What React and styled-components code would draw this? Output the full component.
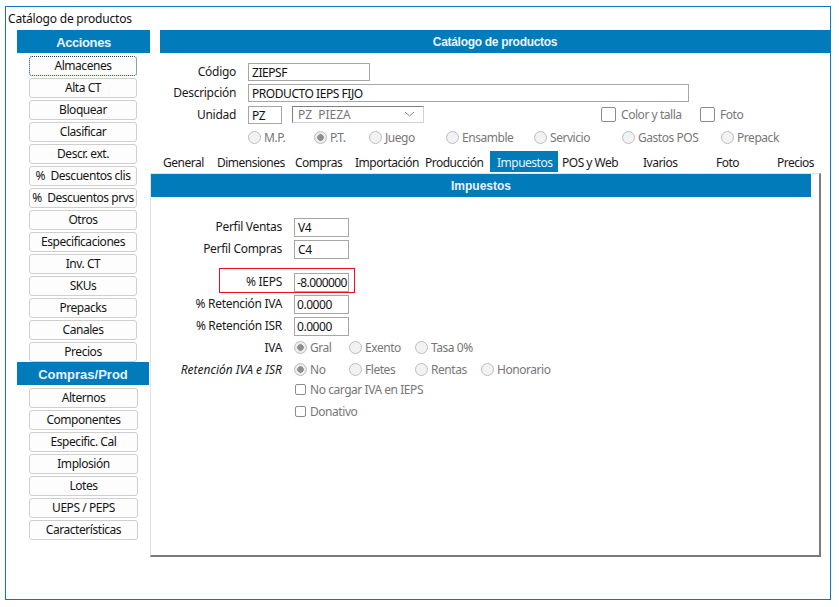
import React from "react";
import styled, { createGlobalStyle } from "styled-components";

const GlobalStyle = createGlobalStyle`
  html, body {
    margin: 0;
    padding: 0;
    background: #fff;
  }
  body {
    font-family: "Noto Sans", "Open Sans", sans-serif;
    font-size: 12px;
    color: #1a1a1a;
  }
`;

const Page = styled.div`
  padding: 6px 0 0 5px;
`;
const Window = styled.div`
  box-sizing: border-box;
  width: 826px;
  height: 594px;
  border: 1px solid #0a78c8;
  box-shadow: 0 1px 0 #b5b5b5;
  background: #fff;
`;
const WindowTitle = styled.div`
  height: 23px;
  padding-left: 2px;
  line-height: 23px;
  font-size: 12px;
  letter-spacing: -0.2px;
  color: #111;
`;
const Body = styled.div`
  display: flex;
`;
const Sidebar = styled.div`
  width: 133px;
  margin-left: 11px;
  display: flex;
  flex-direction: column;
`;
const BlueHeader = styled.div`
  height: 23px;
  line-height: ${(props) => props.$line || 24}px;
  background: #027bbb;
  color: #e9f3f9;
  text-align: center;
  font-family: "Liberation Sans", Arial, sans-serif;
  font-weight: bold;
  font-size: ${(props) => props.$size || 12}px;
  letter-spacing: ${(props) => props.$spacing || 0}px;
`;
const SideHeader = styled(BlueHeader)`
  width: ${(props) => props.$width}px;
`;
const ButtonList = styled.div`
  display: flex;
  flex-direction: column;
  gap: 2px;
  padding: 3px 0 0 12px;
`;
const SideButton = styled.button`
  box-sizing: border-box;
  width: ${(props) => props.$width}px;
  height: 20px;
  padding: 0 0 1px;
  background: #fdfdfd;
  border: 1px ${(props) => (props.$focused ? "dotted #14406e" : "solid #cfcfcf")};
  border-radius: 3px;
  font-family: inherit;
  font-size: 12px;
  line-height: 16px;
  letter-spacing: -0.45px;
  color: #151515;
  white-space: pre;
`;
const Main = styled.div`
  width: 680px;
`;
const MainHeader = styled(BlueHeader)`
  margin-left: 10px;
`;
const Form = styled.div`
  box-sizing: border-box;
  display: flex;
  flex-direction: column;
  padding-top: 10px;
  height: 74px;
`;
const FieldRow = styled.div`
  display: flex;
  align-items: flex-start;
  height: ${(props) => props.$height || 22}px;
`;
const Label = styled.label`
  box-sizing: border-box;
  width: ${(props) => props.$width}px;
  text-align: right;
  padding-right: 12px;
  line-height: 17px;
  letter-spacing: ${(props) => (props.$italic ? 0 : -0.3)}px;
  font-style: ${(props) => (props.$italic ? "italic" : "normal")};
  color: #1a1a1a;
  white-space: nowrap;
  flex: none;
`;
const TextBox = styled.div`
  box-sizing: border-box;
  width: ${(props) => props.$width}px;
  height: ${(props) => props.$height || 18}px;
  padding-left: ${(props) => props.$pad || 3}px;
  border: 1px solid #a6a6a6;
  background: #fff;
  line-height: ${(props) => (props.$height || 18) - 1}px;
  font-size: 12px;
  letter-spacing: ${(props) => props.$spacing || -0.45}px;
  color: #111;
  overflow: hidden;
  white-space: nowrap;
  flex: none;
`;
const SelectBox = styled.div`
  box-sizing: border-box;
  width: 132px;
  height: 17px;
  margin-left: 10px;
  padding: 0 8px 0 5px;
  display: flex;
  align-items: center;
  justify-content: space-between;
  border: 1px solid #d0d0d0;
  border-top-color: #7f7f7f;
  border-left-color: #7f7f7f;
  color: #777;
  font-size: 12px;
  white-space: pre;
  flex: none;
`;
const CheckGroup = styled.div`
  display: flex;
  align-items: center;
  width: ${(props) => props.$width}px;
  margin-left: ${(props) => props.$left || 0}px;
  color: #777;
  letter-spacing: -0.45px;
  flex: none;
`;
const BigCheck = styled.span`
  box-sizing: border-box;
  width: 15px;
  height: 15px;
  margin-right: 5px;
  border: 1px solid #8b8b8b;
  border-radius: 2px;
  flex: none;
`;
const SmallCheck = styled(BigCheck)`
  width: 11px;
  height: 11px;
  margin-right: 4px;
`;
const OptionRow = styled.div`
  display: flex;
  align-items: center;
  height: ${(props) => props.$height || 22}px;
  margin-left: ${(props) => props.$left}px;
`;
const Option = styled.div`
  display: flex;
  align-items: center;
  width: ${(props) => props.$width}px;
  color: #777;
  letter-spacing: -0.45px;
  white-space: nowrap;
  flex: none;
`;
const Radio = styled.span`
  box-sizing: border-box;
  width: 13px;
  height: 13px;
  margin-right: 3px;
  border: 1px solid #bdbdbd;
  border-radius: 50%;
  background: ${(props) =>
    props.$checked
      ? "radial-gradient(circle, #8f8f8f 0 3px, #ececec 3.5px)"
      : "#f2f2f2"};
  flex: none;
`;
const TabBar = styled.div`
  display: flex;
  height: 21px;
  margin: 3px 0 0 13px;
`;
const Tab = styled.div`
  width: ${(props) => props.$width}px;
  line-height: 23px;
  padding-left: ${(props) => props.$pad || 0}px;
  box-sizing: border-box;
  background: ${(props) => (props.$active ? "#027bbb" : "transparent")};
  color: ${(props) => (props.$active ? "#e9f3f9" : "#1a1a1a")};
  letter-spacing: -0.5px;
  white-space: nowrap;
  flex: none;
`;
const Panel = styled.div`
  box-sizing: border-box;
  width: 671px;
  height: 384px;
  margin-top: 1px;
  padding: 0 8px 0 0;
  border: 1px solid #e2e2e2;
  border-right: 2px solid #7b7b7b;
  border-bottom: 2px solid #7b7b7b;
`;
const PanelBody = styled.div`
  display: flex;
  flex-direction: column;
  padding-top: 21px;
`;
const HighlightRow = styled(FieldRow)`
  position: relative;
`;
const RedBox = styled.div`
  position: absolute;
  left: 68px;
  top: -5px;
  width: 136px;
  height: 25px;
  box-sizing: border-box;
  border: 1px solid #e8111a;
  pointer-events: none;
`;

const acciones = [
  "Almacenes", "Alta CT", "Bloquear", "Clasificar", "Descr. ext.",
  "%  Descuentos clis", "%  Descuentos prvs", "Otros", "Especificaciones",
  "Inv. CT", "SKUs", "Prepacks", "Canales", "Precios",
];
const compras = [
  "Alternos", "Componentes", "Especific. Cal", "Implosión", "Lotes",
  "UEPS / PEPS", "Características",
];
const tipos = [
  { text: "M.P.", width: 66 },
  { text: "P.T.", width: 55, checked: true },
  { text: "Juego", width: 77 },
  { text: "Ensamble", width: 88 },
  { text: "Servicio", width: 88 },
  { text: "Gastos POS", width: 99 },
  { text: "Prepack", width: 70 },
];
const tabs = [
  { text: "General", width: 54 },
  { text: "Dimensiones", width: 78 },
  { text: "Compras", width: 60 },
  { text: "Importación", width: 70 },
  { text: "Producción", width: 65 },
  { text: "Impuestos", width: 68, pad: 7, active: true },
  { text: "POS y Web", width: 85, pad: 4 },
  { text: "Ivarios", width: 73 },
  { text: "Foto", width: 61 },
  { text: "Precios", width: 50 },
];

const Options = ({ items, left, height }) => (
  <OptionRow $left={left} $height={height}>
    {items.map((item) => (
      <Option key={item.text} $width={item.width}>
        <Radio $checked={item.checked} />
        {item.text}
      </Option>
    ))}
  </OptionRow>
);

const App = () => {
  return (
    <Page>
      <GlobalStyle />
      <Window>
        <WindowTitle>Catálogo de productos</WindowTitle>
        <Body>
          <Sidebar>
            <SideHeader $width={133} $size={13} $line={25} $spacing={-0.4}>
              Acciones
            </SideHeader>
            <ButtonList>
              {acciones.map((text, i) => (
                <SideButton key={text} $width={108} $focused={i === 0}>
                  {text}
                </SideButton>
              ))}
            </ButtonList>
            <SideHeader $width={132} $size={13} $line={25}>
              Compras/Prod
            </SideHeader>
            <ButtonList>
              {compras.map((text) => (
                <SideButton key={text} $width={109}>
                  {text}
                </SideButton>
              ))}
            </ButtonList>
          </Sidebar>
          <Main>
            <MainHeader $line={25} $spacing={-0.3}>
              Catálogo de productos
            </MainHeader>
            <Form>
              <FieldRow>
                <Label $width={98}>Código</Label>
                <TextBox $width={122}>ZIEPSF</TextBox>
              </FieldRow>
              <FieldRow>
                <Label $width={98}>Descripción</Label>
                <TextBox $width={441}>PRODUCTO IEPS FIJO</TextBox>
              </FieldRow>
              <FieldRow>
                <Label $width={98}>Unidad</Label>
                <TextBox $width={34}>PZ</TextBox>
                <SelectBox>
                  PZ  PIEZA
                  <svg width="11" height="6" viewBox="0 0 11 6">
                    <path d="M1 1l4.5 4L10 1" fill="none" stroke="#8a8a8a" />
                  </svg>
                </SelectBox>
                <CheckGroup $width={99} $left={177}>
                  <BigCheck />
                  Color y talla
                </CheckGroup>
                <CheckGroup $width={60}>
                  <BigCheck />
                  Foto
                </CheckGroup>
              </FieldRow>
            </Form>
            <Options items={tipos} left={98} height={21} />
            <TabBar>
              {tabs.map((tab) => (
                <Tab key={tab.text} $width={tab.width} $pad={tab.pad} $active={tab.active}>
                  {tab.text}
                </Tab>
              ))}
            </TabBar>
            <Panel>
              <BlueHeader>Impuestos</BlueHeader>
              <PanelBody>
                <FieldRow>
                  <Label $width={143}>Perfil Ventas</Label>
                  <TextBox $width={55} $height={19}>V4</TextBox>
                </FieldRow>
                <FieldRow $height={33}>
                  <Label $width={143}>Perfil Compras</Label>
                  <TextBox $width={55} $height={19}>C4</TextBox>
                </FieldRow>
                <HighlightRow>
                  <Label $width={143}>% IEPS</Label>
                  <TextBox $width={55} $height={19} $pad={2} $spacing={-0.6}>-8.000000</TextBox>
                  <RedBox />
                </HighlightRow>
                <FieldRow>
                  <Label $width={143}>% Retención IVA</Label>
                  <TextBox $width={55} $height={19} $pad={2}>0.0000</TextBox>
                </FieldRow>
                <FieldRow>
                  <Label $width={143}>% Retención ISR</Label>
                  <TextBox $width={55} $height={19} $pad={2}>0.0000</TextBox>
                </FieldRow>
                <FieldRow>
                  <Label $width={143}>IVA</Label>
                  <Options
                    left={0}
                    height={17}
                    items={[
                      { text: "Gral", width: 55, checked: true },
                      { text: "Exento", width: 66 },
                      { text: "Tasa 0%", width: 70 },
                    ]}
                  />
                </FieldRow>
                <FieldRow $height={17}>
                  <Label $width={143} $italic>Retención IVA e ISR</Label>
                  <Options
                    left={0}
                    height={17}
                    items={[
                      { text: "No", width: 55, checked: true },
                      { text: "Fletes", width: 66 },
                      { text: "Rentas", width: 66 },
                      { text: "Honorario", width: 80 },
                    ]}
                  />
                </FieldRow>
                <OptionRow $left={144}>
                  <CheckGroup $width={200}>
                    <SmallCheck />
                    No cargar IVA en IEPS
                  </CheckGroup>
                </OptionRow>
                <OptionRow $left={144}>
                  <CheckGroup $width={200}>
                    <SmallCheck />
                    Donativo
                  </CheckGroup>
                </OptionRow>
              </PanelBody>
            </Panel>
          </Main>
        </Body>
      </Window>
    </Page>
  );
};

export default App;
